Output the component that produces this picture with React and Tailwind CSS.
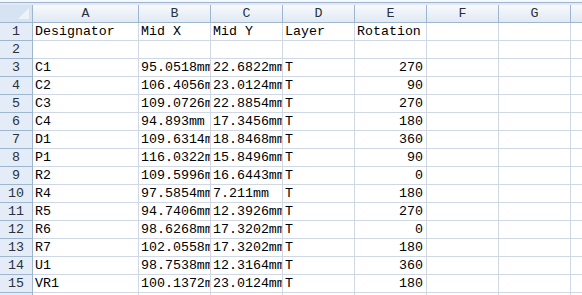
import React from 'react'

const COLS = ['A', 'B', 'C', 'D', 'E', 'F', 'G', '']

const ROWS = [
  ['Designator', 'Mid X', 'Mid Y', 'Layer', 'Rotation'],
  [],
  ['C1', '95.0518mm', '22.6822mm', 'T', 270],
  ['C2', '106.4056mm', '23.0124mm', 'T', 90],
  ['C3', '109.0726mm', '22.8854mm', 'T', 270],
  ['C4', '94.893mm', '17.3456mm', 'T', 180],
  ['D1', '109.6314mm', '18.8468mm', 'T', 360],
  ['P1', '116.0322mm', '15.8496mm', 'T', 90],
  ['R2', '109.5996mm', '16.6443mm', 'T', 0],
  ['R4', '97.5854mm', '7.211mm', 'T', 180],
  ['R5', '94.7406mm', '12.3926mm', 'T', 270],
  ['R6', '98.6268mm', '17.3202mm', 'T', 0],
  ['R7', '102.0558mm', '17.3202mm', 'T', 180],
  ['U1', '98.7538mm', '12.3164mm', 'T', 360],
  ['VR1', '100.1372mm', '23.0124mm', 'T', 180],
  [],
]

const grid =
  'grid grid-cols-[33px_106px_72px_72px_72px_72px_72px_72px_72px]'

const App = () => {
  return (
    <div
      className="w-[582px] h-[295px] overflow-hidden bg-white text-[13.3px] leading-[17px] text-black"
      style={{ fontFamily: '"Liberation Mono", "Noto Sans CJK SC", monospace' }}
    >
      {/* top strip */}
      <div className="h-[5px] bg-[#e3eaf4] border-t-2 border-t-[#f4f7fb]">
        <div className="h-px bg-[#9fb4cf]"></div>
      </div>

      {/* column headers */}
      <div className={`${grid} h-[18px] border-b border-[#9eb6ce] bg-gradient-to-b from-[#f7f9fc] to-[#e2e9f3] text-[#27313f]`}>
        <div className="relative border-r border-[#9eb6ce] bg-[#d6e3f3]">
          <div className="absolute right-[3px] bottom-[3px] w-0 h-0 border-l-[11px] border-l-transparent border-b-[11px] border-b-[#eef3fa]"></div>
        </div>
        {COLS.map((c, i) => (
          <div key={i} className="border-r border-[#9eb6ce] text-center">
            {c}
          </div>
        ))}
      </div>

      {/* rows */}
      {ROWS.map((r, ri) => (
        <div key={ri} className={`${grid} h-[18px]`}>
          <div className="border-r border-b border-[#9eb6ce] bg-[#e4ecf7] text-center text-[#27313f]">
            {ri + 1}
          </div>
          {Array.from({ length: 8 }).map((_, ci) => {
            const v = r[ci]
            const num = typeof v === 'number'
            return (
              <div
                key={ci}
                className={`border-r border-b border-[#d0d7e5] overflow-hidden whitespace-nowrap ${
                  num ? 'text-right pr-[3px]' : 'pl-[2px]'
                }`}
              >
                {v}
              </div>
            )
          })}
        </div>
      ))}
    </div>
  )
}

export default App
